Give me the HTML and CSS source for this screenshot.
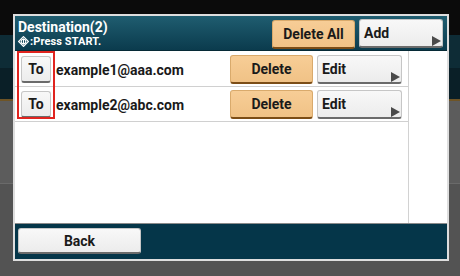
FILE: index.html
```html
<!DOCTYPE html>
<html>
<head>
<meta charset="utf-8">
<link rel="stylesheet" href="styles.css">
</head>
<body>
<div class="dialog">
  <div class="header">
    <div class="titles">
      <div class="title">Destination(2)</div>
      <div class="subtitle"><svg class="start-icon" width="11" height="11" viewBox="0 0 11 11"><path d="M5.5 0.6 L10.4 5.5 L5.5 10.4 L0.6 5.5 Z" fill="none" stroke="#fff" stroke-width="1.2"/><circle cx="5.5" cy="5.5" r="2.3" fill="none" stroke="#fff" stroke-width="1.1"/><line x1="5.5" y1="2.4" x2="5.5" y2="8.6" stroke="#fff" stroke-width="1.1"/></svg>:Press START.</div>
    </div>
    <div class="head-actions">
      <button class="btn orange delete-all">Delete All</button>
      <button class="btn light arrow add"><span>Add</span><i class="tri"></i></button>
    </div>
  </div>
  <div class="body">
    <div class="list">
      <div class="highlight"></div>
      <div class="row">
        <button class="btn light to">To</button>
        <span class="email">example1@aaa.com</span>
        <button class="btn orange del">Delete</button>
        <button class="btn light arrow edit"><span>Edit</span><i class="tri"></i></button>
      </div>
      <div class="row">
        <button class="btn light to">To</button>
        <span class="email">example2@abc.com</span>
        <button class="btn orange del">Delete</button>
        <button class="btn light arrow edit"><span>Edit</span><i class="tri"></i></button>
      </div>
    </div>
    <div class="scroll"></div>
  </div>
  <div class="footer">
    <button class="btn light back">Back</button>
  </div>
</div>
</body>
</html>
```
FILE: styles.css
```css
html, body {
  margin: 0;
  padding: 0;
}
body {
  width: 460px;
  height: 276px;
  overflow: hidden;
  box-sizing: border-box;
  padding: 14px 0 0 13px;
  font-family: Roboto, "Liberation Sans", sans-serif;
  background: linear-gradient(to bottom,
    #0b0b0b 0, #0b0b0b 35px,
    #0e2c36 35px, #0e2c36 68px,
    #0a1f27 68px, #0a1f27 99px,
    #6e5426 99px, #6e5426 101px,
    #5c5c5c 101px, #5c5c5c 183px,
    #6a6a6a 183px, #6a6a6a 184px,
    #535353 184px, #535353 276px);
}
.dialog {
  width: 436px;
  height: 247px;
  box-sizing: border-box;
  border: 2px solid #dedede;
  display: flex;
  flex-direction: column;
  background: #fff;
}
.header {
  height: 35px;
  box-sizing: border-box;
  background: linear-gradient(to bottom, #1f5d70, #0b3b4d);
  border-bottom: 1px solid #062a36;
  display: flex;
  justify-content: space-between;
  padding: 0 4px 0 3px;
}
.titles {
  color: #fff;
  font-weight: bold;
  padding-top: 3px;
}
.title {
  font-size: 14px;
  line-height: 16px;
}
.subtitle {
  font-size: 11px;
  line-height: 13px;
  display: flex;
  align-items: center;
  letter-spacing: 0.1px;
}
.start-icon {
  margin-right: 1px;
}
.head-actions {
  display: flex;
  gap: 4px;
  padding-top: 3px;
}
.btn {
  box-sizing: border-box;
  font-family: Roboto, "Liberation Sans", sans-serif;
  font-weight: bold;
  font-size: 14px;
  color: #1a1a1a;
  padding: 0;
  margin: 0;
  border-radius: 3px;
  cursor: default;
}
.btn.light {
  background: linear-gradient(to bottom, #f8f8f8, #ececec);
  border: 1px solid #c6c6c6;
  border-bottom: 2px solid #6b6b6b;
}
.btn.orange {
  background: linear-gradient(to bottom, #f7cd96, #f0c286);
  border: 1px solid #d9aa6c;
  border-bottom: 2px solid #7c4d16;
}
.btn.arrow {
  display: flex;
  align-items: stretch;
  text-align: left;
  padding: 0 1px 0 4px;
}
.btn.arrow span {
  align-self: center;
  margin-top: -1px;
}
.tri {
  margin-left: auto;
  align-self: flex-end;
  width: 0;
  height: 0;
  border-top: 5px solid transparent;
  border-bottom: 5px solid transparent;
  border-left: 9px solid #4a4a4a;
}
.delete-all {
  width: 83px;
  height: 29px;
  margin-top: 1px;
}
.add {
  width: 84px;
  height: 29px;
}
.body {
  flex: 1;
  display: flex;
  background: #fff;
}
.list {
  width: 393px;
  border-right: 1px solid #d2d2d2;
  position: relative;
  padding-top: 1px;
}
.scroll {
  flex: 1;
}
.row {
  height: 35px;
  box-sizing: border-box;
  border-bottom: 1px solid #d0d0d0;
  display: flex;
  align-items: flex-start;
  padding: 3px 6px 0 6px;
}
.to {
  width: 30px;
  height: 27px;
  margin-top: 1px;
}
.email {
  font-weight: bold;
  font-size: 14px;
  color: #1a1a1a;
  line-height: 16px;
  margin-left: 5px;
  margin-top: 7px;
  flex: 1;
}
.del {
  width: 83px;
  height: 29px;
}
.edit {
  width: 85px;
  height: 29px;
  margin-left: 4px;
}
.highlight {
  position: absolute;
  left: 2px;
  top: 0;
  width: 38px;
  height: 68px;
  box-sizing: border-box;
  border: 2px solid #e0241f;
  pointer-events: none;
  z-index: 2;
}
.footer {
  height: 36px;
  box-sizing: border-box;
  background: #053649;
  border-top: 1px solid #8a8a8a;
  padding: 4px 0 0 3px;
}
.back {
  width: 123px;
  height: 26px;
  text-align: center;
}
```
